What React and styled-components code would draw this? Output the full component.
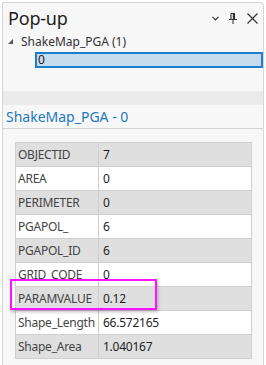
import React from "react";
import styled, { createGlobalStyle } from "styled-components";

const GlobalStyle = createGlobalStyle`
  html, body {
    margin: 0;
    padding: 0;
    background: #ffffff;
  }
  body {
    font-family: "Noto Sans", "Open Sans", sans-serif;
    color: #222;
  }
`;

const Panel = styled.div`
  position: relative;
  box-sizing: border-box;
  margin: 2px 2px 0 2px;
  height: 363px;
  border: 1px solid #d6d6d6;
  border-bottom: none;
  border-top-right-radius: 4px;
  background: #f7f7f7;
  overflow: hidden;
`;

const Header = styled.div`
  display: flex;
  align-items: center;
  height: 30px;
  padding: 0 5px 0 5px;
`;

const Title = styled.div`
  flex: 1;
  font-size: 18px;
  color: #1e1e1e;
  letter-spacing: -0.2px;
`;

const Tools = styled.div`
  display: flex;
  align-items: center;
  gap: 10px;
  color: #333;
`;

const IconBox = styled.span`
  display: flex;
  align-items: center;
  justify-content: center;
  width: ${(p) => p.w}px;
  height: 12px;
`;

const TreeRow = styled.div`
  display: flex;
  align-items: center;
  height: 16px;
  padding-left: 5px;
  font-size: 12px;
  color: #333;
`;

const Caret = styled.span`
  width: 0;
  height: 0;
  border-left: 5px solid transparent;
  border-bottom: 5px solid #555;
  margin-right: 8px;
`;

const SelectedItem = styled.div`
  box-sizing: border-box;
  margin: 3px 0 0 32px;
  height: 16px;
  background: #c6dcee;
  border: 2px solid #1a7ecc;
  font-size: 12px;
  line-height: 12px;
  padding-left: 1px;
  color: #222;
`;

const Band = styled.div`
  margin-top: 23px;
  height: 14px;
  background: #ebebeb;
`;

const LayerTitle = styled.div`
  box-sizing: border-box;
  height: 24px;
  display: flex;
  align-items: center;
  padding: 0 0 1px 3px;
  border-bottom: 1px solid #d4d4d4;
  font-size: 14px;
  color: #1d78c1;
`;

const TableWrap = styled.div`
  padding: 13px 0 0 12px;
`;

const Table = styled.div`
  width: 235px;
  border: 1px solid #cfcfcf;
  border-bottom: none;
`;

const Row = styled.div`
  display: grid;
  grid-template-columns: 83px 1fr;
  height: 24px;
  box-sizing: border-box;
  border-bottom: 1px solid #cfcfcf;
  background: ${(p) => (p.$shade ? "#dfdfdf" : "#ffffff")};
  font-size: 12px;
  letter-spacing: -0.25px;
`;

const Cell = styled.div`
  display: flex;
  align-items: center;
  padding-left: ${(p) => (p.$value ? "4px" : "2px")};
  color: ${(p) => (p.$value ? "#1e1e1e" : "#444")};
  border-right: ${(p) => (p.$value ? "none" : "1px solid #cfcfcf")};
  white-space: nowrap;
`;

const Highlight = styled.div`
  position: absolute;
  left: 7px;
  top: 276px;
  width: 143px;
  height: 27px;
  border: 2px solid #ff14ff;
  box-shadow: 1px 2px 3px rgba(0, 0, 0, 0.25);
  pointer-events: none;
`;

const rows = [
  ["OBJECTID", "7"],
  ["AREA", "0"],
  ["PERIMETER", "0"],
  ["PGAPOL_", "6"],
  ["PGAPOL_ID", "6"],
  ["GRID_CODE", "0"],
  ["PARAMVALUE", "0.12"],
  ["Shape_Length", "66.572165"],
  ["Shape_Area", "1.040167"],
];

function App() {
  return (
    <>
      <GlobalStyle />
      <Panel>
        <Header>
          <Title>Pop-up</Title>
          <Tools>
            <IconBox w={8}>
              <svg width="7" height="5" viewBox="0 0 7 5">
                <path d="M0.5 0.8 L3.5 3.8 L6.5 0.8" fill="none" stroke="#333" strokeWidth="1.2" />
              </svg>
            </IconBox>
            <IconBox w={8}>
              <svg width="8" height="11" viewBox="0 0 8 11">
                <path d="M2 0.5 H5.5 V6 M2 0.5 V6 M0 6.5 H8 M4 6.5 V11" fill="none" stroke="#333" strokeWidth="1.1" />
                <path d="M4.5 0.5 V6" stroke="#333" strokeWidth="1.3" />
              </svg>
            </IconBox>
            <IconBox w={11}>
              <svg width="11" height="11" viewBox="0 0 11 11">
                <path d="M0.5 0.5 L10.5 10.5 M10.5 0.5 L0.5 10.5" stroke="#333" strokeWidth="1.2" />
              </svg>
            </IconBox>
          </Tools>
        </Header>
        <TreeRow>
          <Caret />
          ShakeMap_PGA (1)
        </TreeRow>
        <SelectedItem>0</SelectedItem>
        <Band />
        <LayerTitle>ShakeMap_PGA - 0</LayerTitle>
        <TableWrap>
          <Table>
            {rows.map(([name, value], i) => (
              <Row key={name} $shade={i % 2 === 0}>
                <Cell>{name}</Cell>
                <Cell $value>{value}</Cell>
              </Row>
            ))}
          </Table>
        </TableWrap>
        <Highlight />
      </Panel>
    </>
  );
}

export default App;
